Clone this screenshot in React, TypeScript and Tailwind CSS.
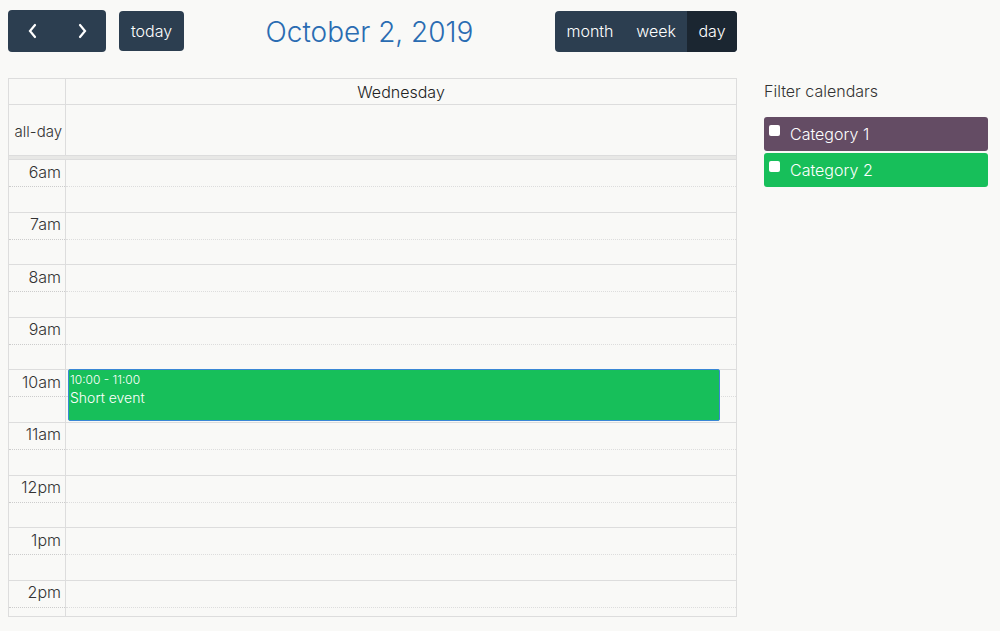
import React from "react";

const hours = ["6am", "7am", "8am", "9am", "10am", "11am", "12pm", "1pm", "2pm"];

export default function App() {
  return (
    <div
      className="w-[1000px] h-[631px] bg-[#f9f9f7] overflow-hidden text-[#333]"
      style={{ fontFamily: "Inter, 'Helvetica Neue', Arial, sans-serif" }}
    >
      <div className="flex">
        <div className="w-[729px] ml-[8px]">
          {/* toolbar */}
          <div className="flex items-center h-[52px] pt-[10px] relative">
            <div className="flex h-[42px] w-[98px] rounded-[4px] bg-[#2c3e50] text-white">
              <button className="flex-1 flex items-center justify-center">
                <svg width="14" height="16" viewBox="0 0 14 16" fill="none" stroke="white" strokeWidth="2.2" strokeLinecap="round">
                  <path d="M9 2 L4 8 L9 14" />
                </svg>
              </button>
              <button className="flex-1 flex items-center justify-center">
                <svg width="14" height="16" viewBox="0 0 14 16" fill="none" stroke="white" strokeWidth="2.2" strokeLinecap="round">
                  <path d="M5 2 L10 8 L5 14" />
                </svg>
              </button>
            </div>
            <button className="ml-[13px] h-[40px] w-[65px] rounded-[4px] bg-[#2c3e50] text-white font-light text-[16px]">
              today
            </button>
            <div className="flex-1 text-center text-[28px] font-light text-[#2a6cb2] pl-[0px] pr-[0px] pt-[2px]">
              October 2, 2019
            </div>
            <div className="flex h-[41px] rounded-[4px] overflow-hidden bg-[#2c3e50] text-white text-[16px] font-light">
              <button className="w-[70px]">month</button>
              <button className="w-[62px]">week</button>
              <button className="w-[50px] bg-[#1b2631]">day</button>
            </div>
          </div>

          {/* calendar */}
          <div className="mt-[26px] border border-[#ddd] w-[729px]">
            <div className="flex h-[26px] border-b border-[#ddd]">
              <div className="w-[57px] border-r border-[#ddd]" />
              <div className="flex-1 flex items-center justify-center text-[16px] font-light text-[#222]">Wednesday</div>
            </div>
            <div className="flex h-[50px]">
              <div className="w-[57px] border-r border-[#ddd] flex items-center justify-end pr-[3px] pt-[4px] text-[15px] font-light">
                all-day
              </div>
              <div className="flex-1" />
            </div>
            <div className="h-[4px] bg-[#e8e8e6] border-t border-[#ddd]" />
            <div className="relative h-[457px] overflow-hidden">
              {hours.map((h) => (
                <div key={h} className="flex h-[52.6px]">
                  <div className="w-[57px] border-r border-[#ddd] border-t border-t-[#ddd] flex flex-col">
                    <div className="h-[26px] flex items-center justify-end pr-[4px] text-[16px] font-light pb-[3px]">{h}</div>
                    <div className="flex-1 border-t border-dotted border-[#ccc]" />
                  </div>
                  <div className="flex-1 border-t border-[#ddd] flex flex-col">
                    <div className="h-[26px]" />
                    <div className="flex-1 border-t border-dotted border-[#ddd]" />
                  </div>
                </div>
              ))}
              {/* event */}
              <div className="absolute left-[59px] top-[210px] w-[652px] h-[52px] bg-[#17bf5a] border border-[#3a87d5] rounded-[2px] text-white px-[1px] pt-[2px] font-light">
                <div className="text-[12px] leading-[15px]">10:00 - 11:00</div>
                <div className="text-[14px] leading-[20px] mt-[1px]">Short event</div>
              </div>
            </div>
          </div>
        </div>

        {/* sidebar */}
        <div className="ml-[27px] w-[224px] pt-[81px]">
          <div className="text-[16px] font-light text-[#333] leading-[20px]">Filter calendars</div>
          <div className="mt-[16px] flex flex-col gap-[2px]">
            <div className="h-[34px] rounded-[3px] bg-[#644c64] text-white flex items-center px-[5px] text-[16px] font-light">
              <span className="w-[11px] h-[11px] bg-white rounded-[2px] -mt-[7px] mr-[10px]" />
              Category 1
            </div>
            <div className="h-[34px] rounded-[3px] bg-[#17bf5a] text-white flex items-center px-[5px] text-[16px] font-light">
              <span className="w-[11px] h-[11px] bg-white rounded-[2px] -mt-[7px] mr-[10px]" />
              Category 2
            </div>
          </div>
        </div>
      </div>
    </div>
  );
}
